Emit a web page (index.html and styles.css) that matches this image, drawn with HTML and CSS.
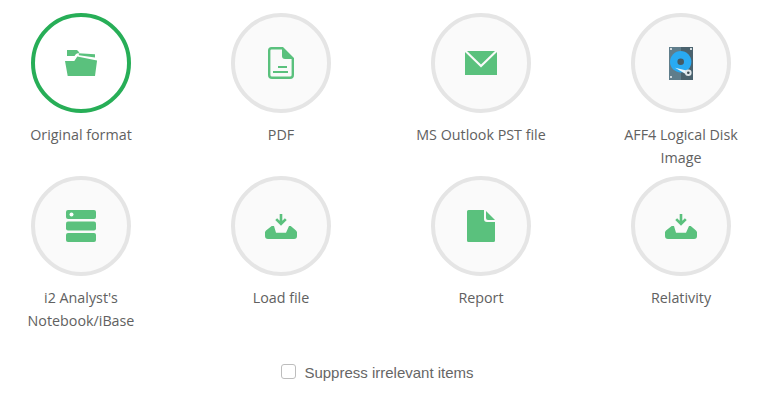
FILE: index.html
```html
<!DOCTYPE html>
<html lang="en">
<head>
<meta charset="utf-8">
<title>Export format</title>
<link rel="stylesheet" href="styles.css">
</head>
<body>
<main class="page">
  <div class="formats">
    <div class="format">
      <div class="circle selected">
        <svg class="icon" width="32" height="26" viewBox="0 0 32 26"><path class="g" d="M2 0h10l2.500 2.500-3.500 1.500-1.500 2H2z"/><path class="g" d="M13.500 3.200L30 4.200v3.300L14 5.200z"/><path class="g" d="M0 11h9.300l3-4.500L32 10.500v0.500l-2 15H2.700z"/></svg>
      </div>
      <div class="label">Original format</div>
    </div>
    <div class="format">
      <div class="circle">
        <svg class="icon" width="26" height="32" viewBox="0 0 26 32"><path class="s" d="M3.500 1.200h11L24.800 11.500V28a2.800 2.800 0 0 1-2.800 2.800H4A2.800 2.800 0 0 1 1.200 28V3.500a2.300 2.300 0 0 1 2.300-2.300z" fill="none" stroke-width="2.400"/><path class="g" d="M14 1l11 11h-8a3 3 0 0 1-3-3z"/><rect class="g" x="10" y="19" width="9" height="2"/><rect class="g" x="5" y="24" width="15" height="2"/></svg>
      </div>
      <div class="label">PDF</div>
    </div>
    <div class="format">
      <div class="circle">
        <svg class="icon" width="32" height="24" viewBox="0 0 32 24"><path class="g" d="M0 1L16 16.500 32 1V24H0z"/><path class="g" d="M2 0h28L16 13.500z"/></svg>
      </div>
      <div class="label">MS Outlook PST file</div>
    </div>
    <div class="format">
      <div class="circle">
        <svg class="icon" width="24" height="33" viewBox="0 0 24 33"><rect width="12" height="33" fill="#5f7d8b"/><rect x="12" width="12" height="33" fill="#4a626e"/><circle cx="11.700" cy="14.700" r="10.700" fill="#29aaf2"/><circle cx="11.700" cy="14.700" r="3.300" fill="#455a64"/><path d="M6 20.700l13.500 3.300-2 3.500z" fill="#e8f6fd"/><circle cx="19.300" cy="25.800" r="3.300" fill="#dfe6ea"/><circle cx="19.300" cy="25.800" r="1.300" fill="#37474f"/><rect x="1" y="1" width="2" height="2" fill="#cfd8dc"/><rect x="21" y="1" width="2" height="2" fill="#cfd8dc"/><rect x="1" y="29" width="2" height="2" fill="#cfd8dc"/></svg>
      </div>
      <div class="label">AFF4 Logical Disk Image</div>
    </div>
    <div class="format">
      <div class="circle">
        <svg class="icon" width="30" height="32" viewBox="0 0 30 32"><rect class="g" width="30" height="9" rx="2"/><rect class="g" y="11.500" width="30" height="9" rx="2"/><rect class="g" y="23" width="30" height="9" rx="2"/><circle cx="5.500" cy="4.500" r="2" fill="#fff"/></svg>
      </div>
      <div class="label">i2 Analyst's Notebook/iBase</div>
    </div>
    <div class="format">
      <div class="circle">
        <svg class="icon" width="32" height="25" viewBox="0 0 32 25"><path class="s" d="M16 0v9.500M11.200 5.200l4.800 4.800 4.800-4.800" fill="none" stroke-width="2.600"/><path class="g" d="M6.700 12H9l2 6.700h10L24 12h1.700L31 16.500l1 1.500v4a3 3 0 0 1-3 3H3a3 3 0 0 1-3-3v-4l1-1.500z"/></svg>
      </div>
      <div class="label">Load file</div>
    </div>
    <div class="format">
      <div class="circle">
        <svg class="icon" width="28" height="32" viewBox="0 0 28 32"><path class="g" d="M1.500 0H17v9a3 3 0 0 0 3 3h8v18.500a1.500 1.500 0 0 1-1.500 1.500h-25A1.500 1.500 0 0 1 0 30.500V1.500A1.500 1.500 0 0 1 1.500 0z"/><path class="g" d="M19 1l9 9h-7a2 2 0 0 1-2-2z"/></svg>
      </div>
      <div class="label">Report</div>
    </div>
    <div class="format">
      <div class="circle">
        <svg class="icon" width="32" height="25" viewBox="0 0 32 25"><path class="s" d="M16 0v9.500M11.200 5.200l4.800 4.800 4.800-4.800" fill="none" stroke-width="2.600"/><path class="g" d="M6.700 12H9l2 6.700h10L24 12h1.700L31 16.500l1 1.500v4a3 3 0 0 1-3 3H3a3 3 0 0 1-3-3v-4l1-1.500z"/></svg>
      </div>
      <div class="label">Relativity</div>
    </div>
  </div>
  <label class="suppress"><span class="box"></span><span class="suppress-text">Suppress irrelevant items</span></label>
</main>
</body>
</html>
```

FILE: styles.css
```css
html, body {
  margin: 0;
  padding: 0;
  background: #fff;
}

body {
  width: 776px;
  height: 410px;
  overflow: hidden;
  font-family: "Open Sans", "Liberation Sans", sans-serif;
  color: #616161;
}

.page {
  padding: 13px 0 0 16px;
}

.formats {
  display: grid;
  grid-template-columns: repeat(4, 130px);
  column-gap: 70px;
  grid-auto-rows: 163px;
}

.format {
  display: flex;
  flex-direction: column;
  align-items: center;
}

.circle {
  box-sizing: border-box;
  width: 100px;
  height: 100px;
  border: 4px solid #e5e5e5;
  border-radius: 50%;
  background: #fafafa;
  display: flex;
  align-items: center;
  justify-content: center;
}

.circle.selected {
  border-color: #27ae57;
  background: #fff;
}

.g {
  fill: #5ac17d;
}

.s {
  stroke: #5ac17d;
}

.label {
  margin-top: 10px;
  font-size: 14.3px;
  line-height: 23px;
  text-align: center;
}

.suppress {
  display: flex;
  align-items: center;
  justify-content: center;
  gap: 8px;
  margin: 20px 0 0 -16px;
  padding-right: 21px;
  height: 24px;
}

.box {
  box-sizing: border-box;
  width: 15px;
  height: 15px;
  border: 1px solid #bdbdbd;
  border-radius: 3px;
  background: #fff;
}

.suppress-text {
  padding-top: 2px;
  font-family: "Liberation Sans", Arial, sans-serif;
  font-size: 15px;
  color: #666;
}
```
